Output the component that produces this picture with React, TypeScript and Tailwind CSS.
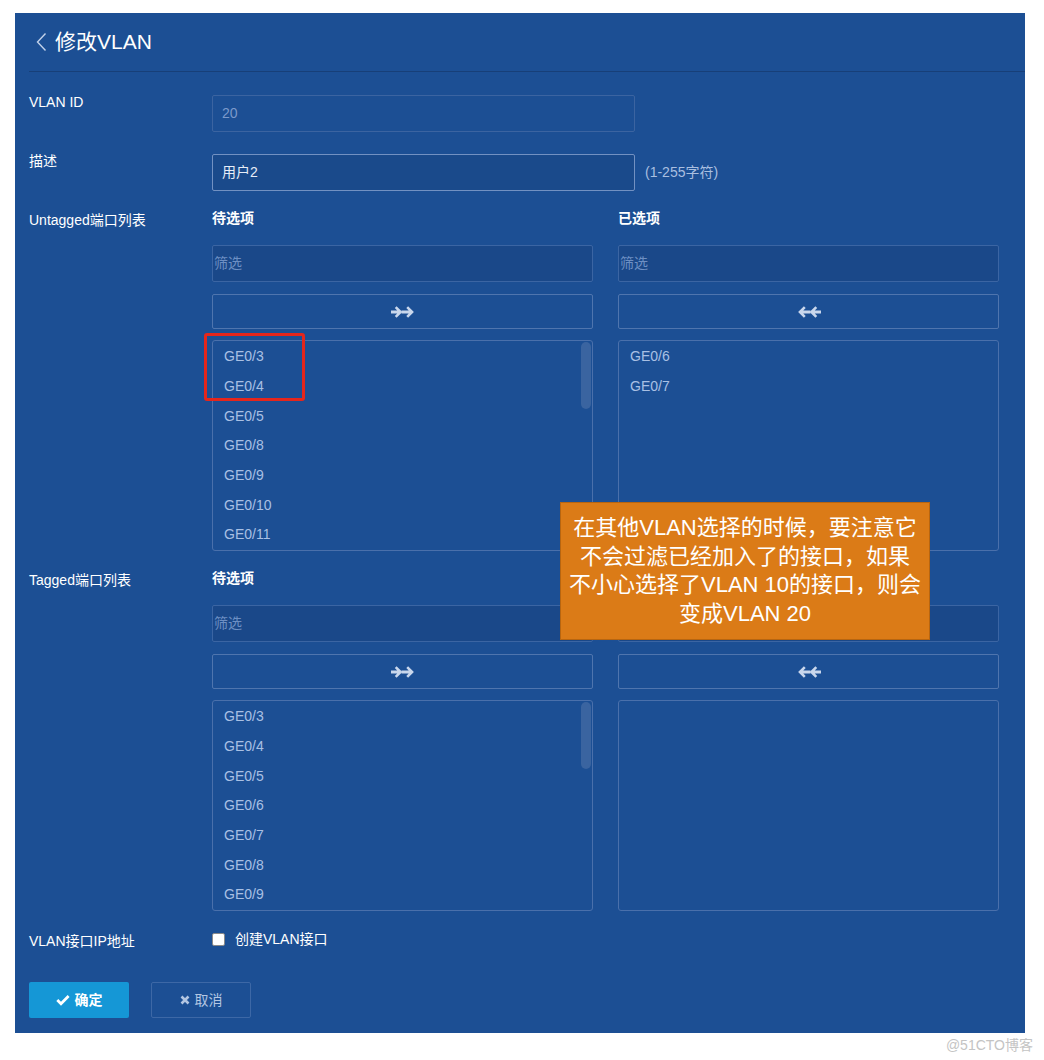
import React from 'react';

const font = { fontFamily: '"Liberation Sans", "Noto Sans CJK SC", sans-serif' };

const untaggedLeft = ['GE0/3', 'GE0/4', 'GE0/5', 'GE0/8', 'GE0/9', 'GE0/10', 'GE0/11'];
const untaggedRight = ['GE0/6', 'GE0/7'];
const taggedLeft = ['GE0/3', 'GE0/4', 'GE0/5', 'GE0/6', 'GE0/7', 'GE0/8', 'GE0/9'];

const ArrowsRight = () => (
  <svg width="26" height="14" viewBox="0 0 26 14" fill="#c9d7ec">
    <path d="M1 5.4h6.2L4.8 3 6.6 1.2 12.4 7l-5.8 5.8L4.8 11l2.4-2.4H1z" />
    <path d="M11.5 5.4h7.2L16.3 3l1.8-1.8L23.9 7l-5.8 5.8-1.8-1.8 2.4-2.4h-7.2z" />
  </svg>
);

const ArrowsLeft = () => (
  <svg width="26" height="14" viewBox="0 0 26 14" fill="#c9d7ec" style={{ transform: 'scaleX(-1)' }}>
    <path d="M1 5.4h6.2L4.8 3 6.6 1.2 12.4 7l-5.8 5.8L4.8 11l2.4-2.4H1z" />
    <path d="M11.5 5.4h7.2L16.3 3l1.8-1.8L23.9 7l-5.8 5.8-1.8-1.8 2.4-2.4h-7.2z" />
  </svg>
);

const PortList = ({ items, scroll }: { items: string[]; scroll?: boolean }) => (
  <div className="relative h-[211px] overflow-hidden rounded-[3px] border border-[#4a70ab] pt-[1px]">
    {items.map((p) => (
      <div key={p} className="flex h-[29.7px] items-center pl-[11px] text-[14px] text-[#a9c0e4]">
        {p}
      </div>
    ))}
    {scroll && (
      <div className="absolute right-[1px] top-[1px] h-[67px] w-[10px] rounded-[5px] bg-[#3a64a0]" />
    )}
  </div>
);

const Column = ({
  title,
  items,
  left,
  scroll,
}: {
  title: string;
  items: string[];
  left?: boolean;
  scroll?: boolean;
}) => (
  <div className="flex w-[381px] flex-col">
    <div className="h-[20px] text-[14px] font-bold leading-[20px] text-white">{title}</div>
    <div className="mt-[17px] flex h-[37px] items-center rounded-[2px] border border-[#3b65a3] bg-[#1a4889] pl-[1px] text-[14px] text-[#6d8fc3]">
      筛选
    </div>
    <div className="mt-[12px] flex h-[35px] items-center justify-center rounded-[2px] border border-[#4f75ae]">
      {left ? <ArrowsRight /> : <ArrowsLeft />}
    </div>
    <div className="mt-[11px]">
      <PortList items={items} scroll={scroll} />
    </div>
  </div>
);

const Transfer = ({ label, left, right }: { label: string; left: string[]; right: string[] }) => (
  <div className="flex">
    <div className="w-[183px] pt-[2px] text-[14px] leading-[20px] text-white">{label}</div>
    <div className="flex gap-[25px]">
      <Column title="待选项" items={left} left scroll />
      <Column title="已选项" items={right} />
    </div>
  </div>
);

export default function App() {
  return (
    <div className="min-h-[1060px] bg-white pt-[13px]" style={font}>
      <div className="relative ml-[15px] h-[1020px] w-[1010px] bg-[#1c4f94]">
        {/* header */}
        <div className="ml-[14px] flex h-[59px] items-center border-b border-[#173f78] pl-[7px]">
          <svg width="11" height="20" viewBox="0 0 11 20" className="mr-[8px]">
            <path d="M9.5 1.5 1.5 10l8 8.5" fill="none" stroke="#c2d2ea" strokeWidth="1.4" />
          </svg>
          <span className="text-[21px] text-white">修改VLAN</span>
        </div>

        <div className="pl-[14px]">
          <div className="mt-[23px] flex">
            <div className="w-[183px] text-[14px] leading-[14px] text-white">VLAN ID</div>
            <div className="flex h-[37px] w-[423px] items-center rounded-[2px] border border-[#3b64a1] pl-[9px] text-[14px] text-[#7b9acb]">
              20
            </div>
          </div>

          <div className="mt-[22px] flex items-start">
            <div className="w-[183px] text-[14px] leading-[14px] text-white">描述</div>
            <div className="flex h-[37px] w-[423px] items-center rounded-[2px] border border-[#7291c2] bg-[#1a4a8b] pl-[9px] text-[14px] text-[#e6edf8]">
              用户2
            </div>
            <div className="flex h-[37px] items-center pl-[10px] text-[14px] text-[#a9bfe0]">(1-255字符)</div>
          </div>

          <div className="mt-[17px]">
            <Transfer label="Untagged端口列表" left={untaggedLeft} right={untaggedRight} />
          </div>

          <div className="mt-[17px]">
            <Transfer label="Tagged端口列表" left={taggedLeft} right={[]} />
          </div>

          <div className="mt-[16px] flex items-center">
            <div className="w-[183px] pt-[4px] text-[14px] text-white">VLAN接口IP地址</div>
            <div className="h-[13px] w-[13px] rounded-[2px] border border-[#8a8a8a] bg-white" />
            <span className="ml-[10px] text-[14px] text-white">创建VLAN接口</span>
          </div>

          <div className="mt-[30px] flex gap-[22px]">
            <button className="flex h-[36px] w-[100px] items-center justify-center gap-[5px] rounded-[2px] bg-[#1597d6] text-[14px] font-bold text-white">
              <svg width="14" height="12" viewBox="0 0 14 12">
                <path d="M1.3 6 5 9.7 12.6 2.1" fill="none" stroke="#fff" strokeWidth="2.8" />
              </svg>
              确定
            </button>
            <button className="flex h-[36px] w-[100px] items-center justify-center gap-[5px] rounded-[2px] border border-[#3d68a6] text-[14px] text-[#b3c6e2]">
              <svg width="10" height="10" viewBox="0 0 10 10">
                <path d="M1.5 1.5 8.5 8.5M8.5 1.5 1.5 8.5" stroke="#b3c6e2" strokeWidth="2.6" />
              </svg>
              取消
            </button>
          </div>
        </div>

        {/* annotation overlays */}
        <div className="absolute left-[189px] top-[320px] h-[68px] w-[101px] rounded-[3px] border-[3px] border-[#e5261c]" />
        <div className="absolute left-[545px] top-[489px] flex h-[138px] w-[370px] items-center justify-center border border-[#b8650f] bg-[#db7b17] text-center text-[22px] leading-[28.5px] text-white">
          <div>
            在其他VLAN选择的时候，要注意它
            <br />
            不会过滤已经加入了的接口，如果
            <br />
            不小心选择了VLAN 10的接口，则会
            <br />
            变成VLAN 20
          </div>
        </div>
      </div>
      <div className="flex justify-end pr-[11px] pt-[2px] text-[14px] text-[#c4c4c4]">@51CTO博客</div>
    </div>
  );
}
